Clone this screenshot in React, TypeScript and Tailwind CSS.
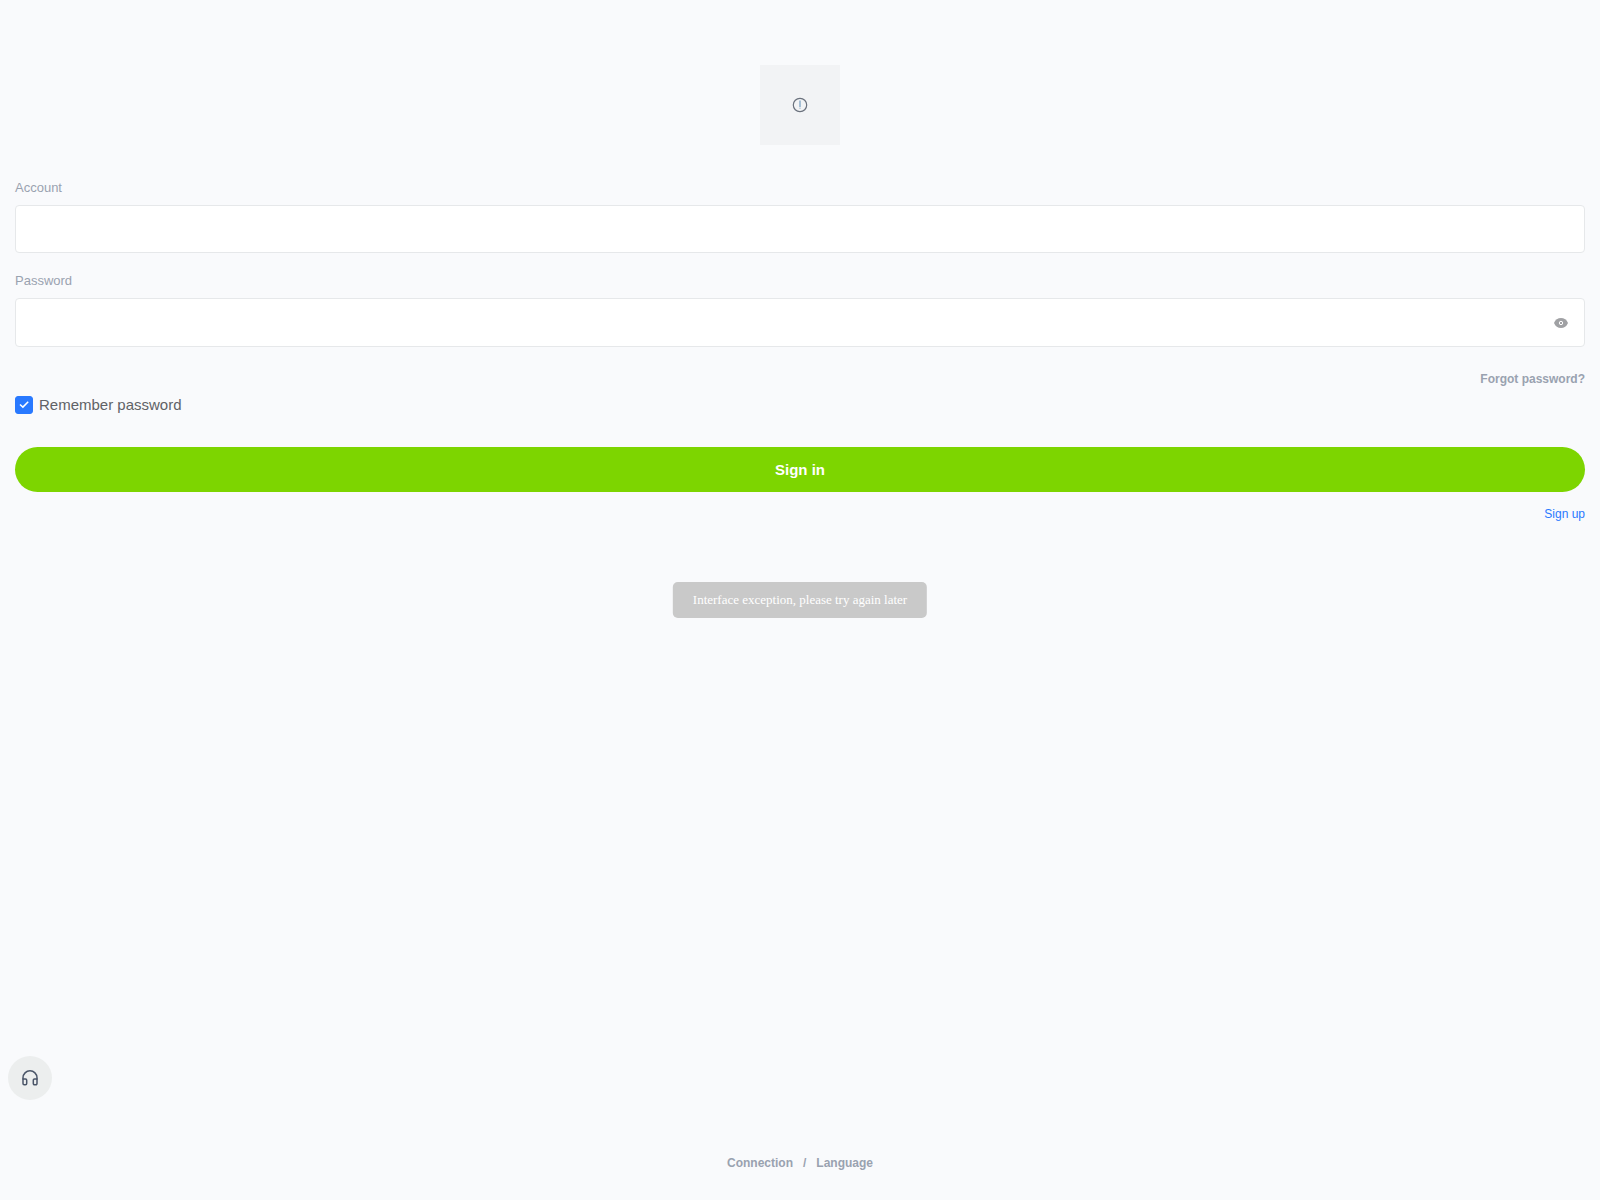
import { useState } from 'react';

function LogoPlaceholder() {
  return (
    <div className="mx-auto flex size-20 items-center justify-center bg-[#f2f3f5]">
      <svg viewBox="0 0 16 16" className="size-4" fill="none" aria-hidden="true">
        <circle cx="8" cy="8" r="6.7" stroke="#6a717d" strokeWidth="1.2" />
        <path d="M8 3.5v6.7" stroke="#86a9c8" strokeWidth="1.4" />
        <path d="M8 10.9v1.2" stroke="#b9c7d6" strokeWidth="1.4" />
      </svg>
    </div>
  );
}

function EyeIcon() {
  return (
    <svg viewBox="0 0 14 10" className="h-[10px] w-[14px]" aria-hidden="true">
      <path
        d="M0 5C1.3 1.8 3.9 0 7 0s5.7 1.8 7 5c-1.3 3.2-3.9 5-7 5S1.3 8.200 0 5Z"
        fill="#a0a1a4"
      />
      <circle cx="7" cy="5" r="1.7" fill="#a0a1a4" stroke="#fff" strokeWidth="1" />
    </svg>
  );
}

function HeadsetIcon() {
  return (
    <svg
      viewBox="0 0 16 16"
      className="size-4"
      fill="none"
      stroke="#4b5669"
      strokeWidth="1.5"
      strokeLinejoin="round"
      aria-hidden="true"
    >
      <path d="M1 9.5V7.8a7 7 0 0 1 14 0v1.7" />
      <path d="M1 9h2.5a1.2 1.2 0 0 1 1.2 1.2v3.4a1.2 1.2 0 0 1-1.2 1.2H2.2A1.2 1.2 0 0 1 1 13.6Z" />
      <path d="M15 9h-2.5a1.2 1.2 0 0 0-1.2 1.2v3.4a1.2 1.2 0 0 0 1.2 1.2h1.3a1.2 1.2 0 0 0 1.2-1.2Z" />
    </svg>
  );
}

export default function App() {
  const [showPassword, setShowPassword] = useState(false);

  return (
    <div className="flex min-h-screen flex-col bg-[#f9fafc] px-[15px] pt-[65px] font-['Liberation_Sans',Arial,sans-serif]">
      <main className="grow">
        <LogoPlaceholder />

        <form className="mt-[33px] flex flex-col" onSubmit={(e) => e.preventDefault()}>
          <label htmlFor="account" className="text-[13px] leading-5 text-[#99a2b0]">
            Account
          </label>
          <input
            id="account"
            type="text"
            className="mt-[7px] h-12 w-full rounded border border-[#e6e8ea] bg-white px-4 text-sm text-[#475467] outline-none"
          />

          <label htmlFor="password" className="mt-[18px] text-[13px] leading-5 text-[#99a2b0]">
            Password
          </label>
          <div className="mt-[7px] flex h-[49px] items-center rounded border border-[#e6e8ea] bg-white px-4">
            <input
              id="password"
              type={showPassword ? 'text' : 'password'}
              className="h-full min-w-0 grow text-sm text-[#475467] outline-none"
            />
            <button
              type="button"
              aria-label="Show password"
              onClick={() => setShowPassword(!showPassword)}
            >
              <EyeIcon />
            </button>
          </div>

          <a href="#forgot" className="mt-[23px] self-end text-xs leading-[18px] font-bold text-[#99a2b0]">
            Forgot password?
          </a>

          <label className="mt-2 flex h-[18px] items-center gap-1.5 self-start text-[15px] text-[#606266]">
            <span className="grid">
              <input
                type="checkbox"
                defaultChecked
                className="peer col-start-1 row-start-1 size-[18px] appearance-none rounded-[3px] border border-[#c8c9cc] bg-white checked:border-[#2979ff] checked:bg-[#2979ff]"
              />
              <svg
                viewBox="0 0 18 18"
                className="pointer-events-none invisible col-start-1 row-start-1 size-[18px] peer-checked:visible"
                fill="none"
                stroke="#fff"
                strokeWidth="1.5"
                aria-hidden="true"
              >
                <path d="m5 8.5 2.900 2.600 5.300-5.400" />
              </svg>
            </span>
            Remember password
          </label>

          <button
            type="submit"
            className="mt-[33px] h-[45px] w-full rounded-full bg-[#7dd500] pt-0.5 text-[15px] font-bold text-white"
          >
            Sign in
          </button>

          <a href="#signup" className="mt-[13px] self-end text-xs leading-[18px] text-[#2979ff]">
            Sign up
          </a>
        </form>
      </main>

      <footer className="flex justify-center gap-[10px] pb-7 text-xs leading-[18px] font-bold text-[#99a2b0]">
        <a href="#connection">Connection</a>
        <span>/</span>
        <a href="#language">Language</a>
      </footer>

      <button
        type="button"
        aria-label="Customer service"
        className="fixed bottom-[100px] left-2 flex size-11 items-center justify-center rounded-full bg-[#eceeee]"
      >
        <HeadsetIcon />
      </button>

      <div
        role="alert"
        className="fixed top-1/2 left-1/2 -translate-x-1/2 -translate-y-1/2 rounded-[5px] bg-[#c9c9c9] px-5 py-2 font-['Liberation_Serif','Times_New_Roman',serif] text-[13px] leading-5 whitespace-nowrap text-white"
      >
        Interface exception, please try again later
      </div>
    </div>
  );
}
